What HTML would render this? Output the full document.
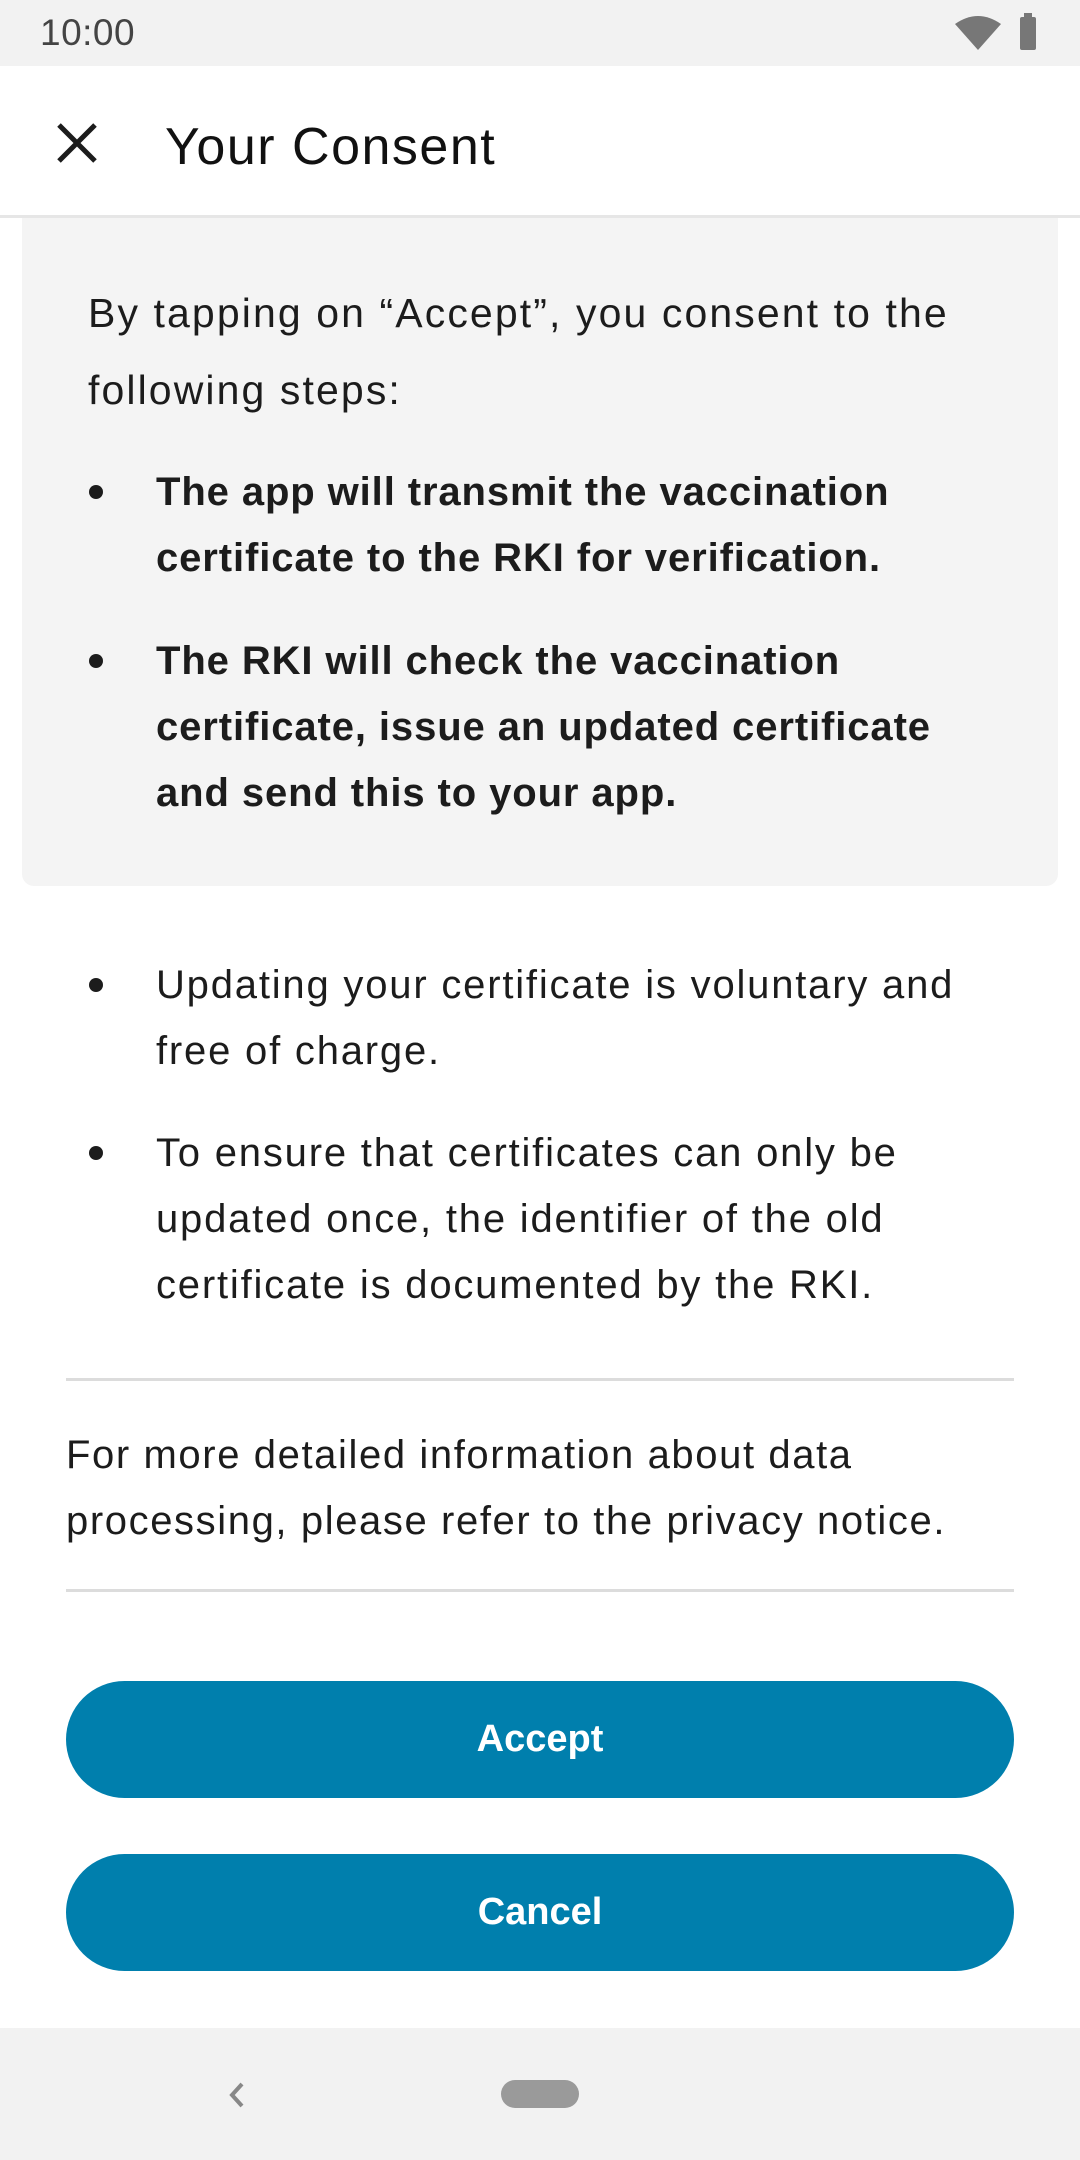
<!DOCTYPE html>
<html><head><meta charset="utf-8"><style>
*{margin:0;padding:0;box-sizing:border-box}
body{width:1080px;height:2160px;position:relative;background:#fff;font-family:"Liberation Sans",Roboto,sans-serif;color:#1c1c1c;overflow:hidden}
.abs{position:absolute;white-space:nowrap}
.status{left:0;top:0;width:1080px;height:66px;background:#f2f2f2}
.nav{left:0;top:2028px;width:1080px;height:132px;background:#f2f2f2}
.bar{left:0;top:66px;width:1080px;height:152px;background:#fff;border-bottom:3px solid #e6e6e6}
.box{left:22px;top:218px;width:1036px;height:668px;background:#f4f4f4;border-radius:0 0 12px 12px}
.t{font-size:41px;line-height:77px;letter-spacing:2.1px}
.b{font-size:40px;line-height:66px;font-weight:bold;letter-spacing:0.9px}
.n{font-size:40px;line-height:66px;letter-spacing:1.8px}
.dot{position:absolute;width:14px;height:14px;border-radius:50%;background:#1c1c1c;left:89px}
.hr{left:66px;width:948px;height:3px;background:#dcdcdc}
.btn{left:66px;width:948px;height:117px;border-radius:59px;background:#007fad;color:#fff;font-size:38px;font-weight:bold;text-align:center;line-height:117px}
</style></head><body>
<div class="abs status"></div>
<div class="abs" style="left:40px;top:8px;font-size:37px;line-height:50px;color:#444;letter-spacing:0.5px">10:00</div>
<svg class="abs" style="left:955px;top:16px" width="46" height="34" viewBox="0 0 46 34"><path d="M0 8 Q23 -8 46 8 L23 34 Z" fill="#777"/></svg>
<div class="abs" style="left:1020px;top:17px;width:16px;height:33px;background:#777;border-radius:2px"></div>
<div class="abs" style="left:1024px;top:13px;width:8px;height:5px;background:#777"></div>

<div class="abs bar"></div>
<svg class="abs" style="left:55px;top:121px" width="44" height="44" viewBox="0 0 44 44"><path d="M4 4 L40 40 M40 4 L4 40" stroke="#1c1c1c" stroke-width="5"/></svg>
<div class="abs" style="left:165px;top:114px;font-size:52px;line-height:66px;font-weight:normal;letter-spacing:1.5px;color:#111">Your Consent</div>

<div class="abs box"></div>
<div class="abs t" style="left:88px;top:275px">By tapping on “Accept”, you consent to the<br>following steps:</div>
<div class="dot" style="top:485px"></div>
<div class="abs b" style="left:156px;top:459px">The app will transmit the vaccination<br>certificate to the RKI for verification.</div>
<div class="dot" style="top:654px"></div>
<div class="abs b" style="left:156px;top:628px">The RKI will check the vaccination<br>certificate, issue an updated certificate<br>and send this to your app.</div>

<div class="dot" style="top:978px"></div>
<div class="abs n" style="left:156px;top:952px">Updating your certificate is voluntary and<br>free of charge.</div>
<div class="dot" style="top:1146px"></div>
<div class="abs n" style="left:156px;top:1120px">To ensure that certificates can only be<br>updated once, the identifier of the old<br>certificate is documented by the RKI.</div>

<div class="abs hr" style="top:1378px"></div>
<div class="abs n" style="left:66px;top:1422px;letter-spacing:1.6px">For more detailed information about data<br>processing, please refer to the privacy notice.</div>
<div class="abs hr" style="top:1589px"></div>

<div class="abs btn" style="top:1681px">Accept</div>
<div class="abs btn" style="top:1854px">Cancel</div>

<div class="abs nav"></div>
<svg class="abs" style="left:224px;top:2080px" width="24" height="30" viewBox="0 0 24 30"><path d="M18 4 L8 15 L18 26" stroke="#888" stroke-width="4" fill="none"/></svg>
<div class="abs" style="left:501px;top:2080px;width:78px;height:28px;border-radius:14px;background:#9a9a9a"></div>
</body></html>
